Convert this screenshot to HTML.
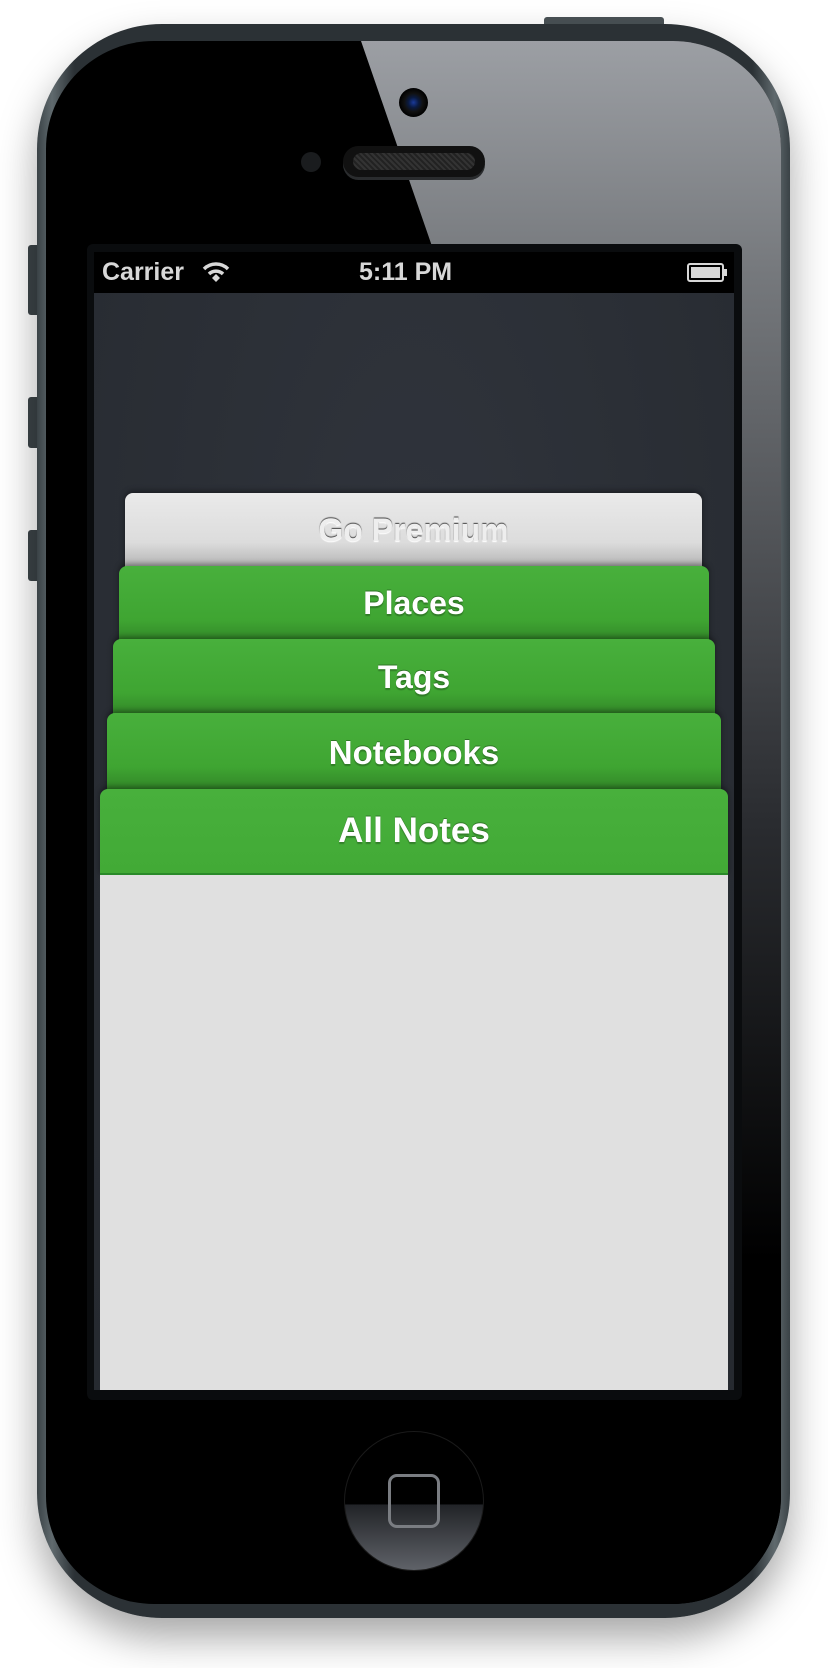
<!DOCTYPE html>
<html><head><meta charset="utf-8"><style>
*{margin:0;padding:0;box-sizing:border-box}
body{width:828px;height:1668px;background:#fff;position:relative;overflow:hidden;font-family:"Liberation Sans",Arial,sans-serif}
.abs{position:absolute}
.phone{left:37px;top:24px;width:753px;height:1594px;border-radius:125px;background:linear-gradient(90deg,#3a4246,#606a6e 2%,#2b3135 5%,#2b3135 95%,#606a6e 98%,#3a4246);box-shadow:0 20px 40px rgba(0,0,0,.35)}
.face{left:46px;top:41px;width:735px;height:1563px;border-radius:108px;background:#000;overflow:hidden}
.card{position:absolute;border-radius:8px 8px 0 0;background:linear-gradient(#48b03c,#3fa532 60%,#2a7322);color:#fff;font-weight:bold;text-align:center;text-shadow:0 -1px 0 rgba(0,0,0,.3),0 2px 1px rgba(0,0,0,.25);box-shadow:0 -2px 6px rgba(0,0,0,.4)}
.btn{left:28px;width:10px;background:#3c4448;border-radius:3px 0 0 3px}
</style></head><body>
<div class="abs btn" style="top:245px;height:70px"></div>
<div class="abs btn" style="top:397px;height:51px"></div>
<div class="abs btn" style="top:530px;height:51px"></div>
<div class="abs" style="left:544px;top:17px;width:120px;height:10px;background:#4a5256;border-radius:3px 3px 0 0"></div>
<div class="abs phone"></div>
<div class="abs face">
  <svg class="abs" style="left:0;top:0" width="735" height="1563">
    <defs><linearGradient id="g" x1="0" y1="0" x2="0" y2="1"><stop offset="0" stop-color="#9c9fa4"/><stop offset="0.15" stop-color="#75787c"/><stop offset="0.5" stop-color="#2a2c30"/><stop offset="0.78" stop-color="#000"/></linearGradient></defs>
    <polygon points="315,0 735,0 735,1563 500,1563 388,211" fill="url(#g)"/>
  </svg>
</div>
<div class="abs" style="left:87px;top:244px;width:655px;height:1156px;background:#0a0c0e;border-radius:6px"></div>
<div class="abs" style="left:399px;top:88px;width:29px;height:29px;border-radius:50%;background:radial-gradient(circle,#1a3a9a 0,#0a1a40 25%,#111 45%,#000 70%)"></div>
<div class="abs" style="left:301px;top:152px;width:20px;height:20px;border-radius:50%;background:#1a1c1e"></div>
<div class="abs" style="left:343px;top:146px;width:142px;height:31px;border-radius:16px;background:#111;box-shadow:0 3px 0 #2a2c2e"></div>
<div class="abs" style="left:353px;top:153px;width:122px;height:17px;border-radius:9px;background:repeating-linear-gradient(45deg,#333 0 2px,#222 2px 4px)"></div>
<!-- screen -->
<div class="abs" style="left:94px;top:252px;width:640px;height:41px;background:#000;color:#d8d8d8;font-weight:bold;font-size:25px">
  <span class="abs" style="left:8px;top:6px">Carrier</span>
  <svg class="abs" style="left:108px;top:9px" width="28" height="22" viewBox="0 0 28 22"><path d="M2 8a17 17 0 0 1 24 0" stroke="#d8d8d8" stroke-width="3.5" fill="none"/><path d="M7 13a10 10 0 0 1 14 0" stroke="#d8d8d8" stroke-width="3.5" fill="none"/><path d="M10 17l4-4 4 4-4 4z" fill="#d8d8d8"/></svg>
  <span class="abs" style="left:265px;top:6px">5:11 PM</span>
  <div class="abs" style="left:593px;top:11px;width:37px;height:19px;border:2px solid #d8d8d8;border-radius:3px;padding:2px"><div style="width:100%;height:100%;background:#d8d8d8"></div></div>
  <div class="abs" style="left:630px;top:17px;width:3px;height:7px;background:#d8d8d8"></div>
</div>
<div class="abs" style="left:94px;top:293px;width:640px;height:1097px;background:radial-gradient(ellipse at 50% 30%,#30343c,#262a30)"></div>
<div class="card" style="left:125px;top:493px;width:577px;height:90px;background:linear-gradient(#eaeaea,#dcdcdc 55%,#999);color:#eee;font-size:32px;line-height:74px;text-shadow:0 -1px 1px rgba(0,0,0,.7),0 1px 1px #fff">Go Premium</div>
<div class="card" style="left:119px;top:566px;width:590px;height:90px;font-size:32px;line-height:74px">Places</div>
<div class="card" style="left:113px;top:639px;width:602px;height:90px;font-size:32px;line-height:76px">Tags</div>
<div class="card" style="left:107px;top:713px;width:614px;height:90px;font-size:33px;line-height:80px">Notebooks</div>
<div class="card" style="left:100px;top:789px;width:628px;height:86px;font-size:35px;line-height:84px;background:linear-gradient(#48b03c,#42aa36);border-bottom:2px solid #2a8a2a">All Notes</div>
<div class="abs" style="left:100px;top:875px;width:628px;height:515px;background:#e0e0e0"></div>
<!-- home -->
<div class="abs" style="left:344px;top:1431px;width:140px;height:140px;border-radius:50%;background:linear-gradient(#000 52%,#222428 53%,#5f6268);border:1px solid #1a1a1a"></div>
<div class="abs" style="left:388px;top:1474px;width:52px;height:54px;border:3px solid #7a7d82;border-radius:9px"></div>
</body></html>
